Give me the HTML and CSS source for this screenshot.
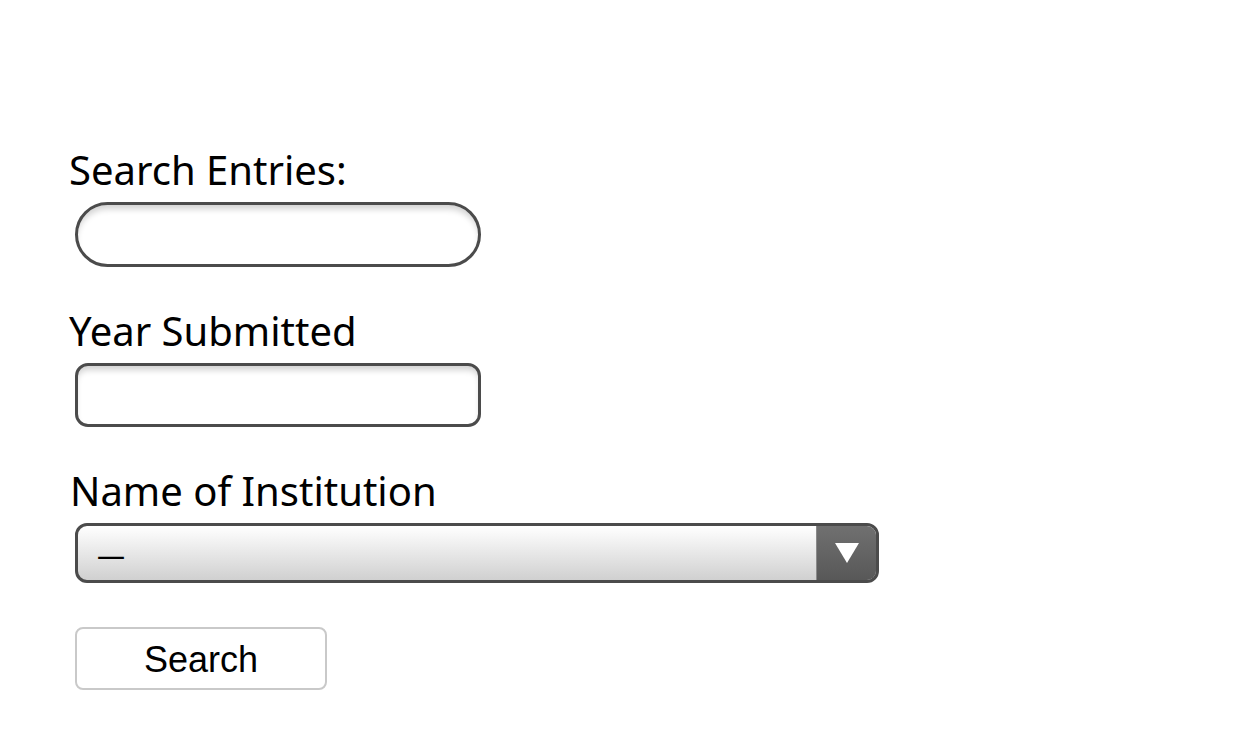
FILE: index.html
```html
<!DOCTYPE html>
<html>
<head>
<meta charset="utf-8">
<link rel="stylesheet" href="styles.css">
</head>
<body>
<form class="form">
  <div class="field">
    <label class="label">Search Entries:</label>
    <div class="input input-round"></div>
  </div>
  <div class="field">
    <label class="label">Year Submitted</label>
    <div class="input input-box"></div>
  </div>
  <div class="field">
    <label class="label label-inst">Name of Institution</label>
    <div class="select">
      <span class="select-value">—</span>
      <span class="select-arrow">
        <svg width="24" height="20" viewBox="0 0 24 20"><polygon points="0,0 24,0 12,20" fill="#fff"/></svg>
      </span>
    </div>
  </div>
  <div class="actions">
    <button type="button" class="btn">Search</button>
  </div>
</form>
</body>
</html>
```
FILE: styles.css
```css
html, body {
  margin: 0;
  padding: 0;
  background: #fff;
}
.form {
  padding: 146px 0 0 69px;
  display: flex;
  flex-direction: column;
  font-family: "Noto Sans", "Open Sans", sans-serif;
  color: #000;
}
.field {
  display: flex;
  flex-direction: column;
  align-items: flex-start;
}
.label {
  font-size: 40px;
  line-height: 48px;
  height: 48px;
  margin-bottom: 8px;
  white-space: nowrap;
}
.label-inst {
  margin-left: 1px;
}
.input {
  margin-left: 6px;
  width: 400px;
  height: 59px;
  border: 3px solid #4b4b4b;
  background: #fff;
  box-shadow: inset 0 6px 6px -2px rgba(0,0,0,0.18);
  margin-bottom: 40px;
}
.input-round {
  border-radius: 33px;
}
.input-box {
  height: 58px;
  border-radius: 13px;
}
.select {
  margin-left: 6px;
  width: 798px;
  height: 54px;
  border: 3px solid #4b4b4b;
  border-radius: 12px;
  background: linear-gradient(#ffffff, #d0d0d0);
  display: flex;
  align-items: center;
  overflow: hidden;
}
.select-value {
  flex: 1;
  padding: 2px 0 0 19px;
  font-size: 28px;
  line-height: 52px;
}
.select-arrow {
  width: 59px;
  height: 54px;
  border-left: 1px solid #8a8a8a;
  background: linear-gradient(#707070, #585858);
  display: flex;
  align-items: center;
  justify-content: center;
}
.actions {
  padding: 44px 0 0 6px;
}
.btn {
  width: 252px;
  height: 63px;
  border: 2px solid #c9c9c9;
  border-radius: 8px;
  background: #fff;
  font-family: "Liberation Sans", Arial, sans-serif;
  font-size: 36px;
  color: #000;
  padding: 3px 0 0;
}
```
